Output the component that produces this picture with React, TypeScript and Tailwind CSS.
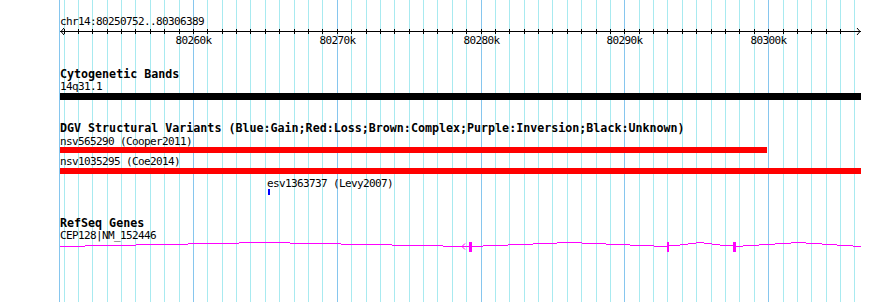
const START = 80250752;
const SCALE = 800 / 55637;
const px = (pos: number) => 60 + (pos - START) * SCALE;

// kb grid, every 1k; the 10k ones are darker
const grid = Array.from({ length: 56 }, (_, i) => {
  const pos = 80250000 + (i + 1) * 1000;
  return { x: Math.round(px(pos)), major: (i + 1) % 10 === 0 };
});

const labels = [80260, 80270, 80280, 80290, 80300];

// intron hats, stepped like the original render: [x1, x2, y]
const introns: [number, number, number][] = [
  [60, 85, 246], [85, 136, 245], [136, 188, 244], [188, 239, 243], [239, 290, 242],
  [290, 341, 243], [341, 392, 244], [392, 443, 245], [443, 469, 246],
  [472, 483, 246], [483, 508, 245], [508, 533, 244], [533, 557, 243], [557, 582, 242],
  [582, 606, 243], [606, 630, 244], [630, 654, 245], [654, 667, 246],
  [669, 680, 245], [680, 688, 244], [688, 696, 243], [696, 704, 242], [704, 712, 243],
  [712, 720, 244], [720, 733, 245],
  [736, 743, 246], [743, 759, 245], [759, 775, 244], [775, 791, 243], [791, 806, 242],
  [806, 822, 243], [822, 837, 244], [837, 853, 245], [853, 861, 246],
];
const exons: [number, number][] = [[469, 3], [667, 2], [733, 3]];

const small = "font-['DejaVu_Sans_Mono',monospace] text-[11px] leading-[12px] tracking-[-0.62px] text-black whitespace-pre";
const title = "font-['DejaVu_Sans_Mono',monospace] font-bold text-[11.67px] leading-[13px] tracking-[0px] text-black whitespace-pre";

function Grid() {
  return (
    <svg className="absolute inset-0" width={890} height={302}>
      <rect x={59} y={0} width={1} height={302} fill="#86c6ee" />
      {grid.map((g) => (
        <rect key={g.x} x={g.x} y={0} width={1} height={302} fill={g.major ? "#86c6ee" : "#a8eaf0"} />
      ))}
    </svg>
  );
}

function Ruler() {
  // top of this svg sits at y=28
  return (
    <svg width={890} height={20} className="block">
      <rect x={60} y={3} width={801} height={1} fill="#000" />
      <polyline points="64,0 61,3.5 64,7" fill="none" stroke="#000" strokeWidth={1} />
      <polyline points="857,0 860,3.5 857,7" fill="none" stroke="#000" strokeWidth={1} />
      {grid.slice(0, 55).map((g) => (
        <rect key={g.x} x={g.x} y={1} width={1} height={5} fill="#000" />
      ))}
      {labels.map((k) => (
        <text
          key={k}
          x={Math.round(px(k * 1000)) + 0.5}
          y={16}
          textAnchor="middle"
          fontFamily="DejaVu Sans Mono, monospace"
          fontSize={11}
          letterSpacing={-0.62}
          fill="#000"
        >
          {k}k
        </text>
      ))}
    </svg>
  );
}

function GeneModel() {
  // top of this svg sits at y=241
  const top = 241;
  return (
    <svg width={890} height={13} className="block">
      {introns.map(([a, b, y]) => (
        <rect key={a} x={a} y={y - top} width={b - a} height={1} fill="#ff00ff" />
      ))}
      {exons.map(([x, w]) => (
        <rect key={x} x={x} y={1} width={w} height={10} fill="#ff00ff" />
      ))}
      <polyline points="465,2.5 462,5.5 465,8.5" fill="none" stroke="#ff00ff" strokeWidth={1} />
    </svg>
  );
}

export default function App() {
  return (
    <div className="relative w-[890px] h-[302px] bg-white overflow-hidden">
      <Grid />
      <div className="relative flex flex-col pt-[16px]">
        <div className={`${small} pl-[60px]`}>chr14:80250752..80306389</div>
        <Ruler />

        <div className={`${title} pl-[60px] mt-[20px]`}>Cytogenetic Bands</div>
        <div className={`${small} pl-[60px]`}>14q31.1</div>
        <div className="ml-[60px] w-[801px] h-[7px] bg-black" />

        <div className={`${title} pl-[60px] mt-[22px]`}>
          DGV Structural Variants (Blue:Gain;Red:Loss;Brown:Complex;Purple:Inversion;Black:Unknown)
        </div>
        <div className={`${small} pl-[60px] mt-[1px]`}>nsv565290 (Cooper2011)</div>
        <div className="ml-[60px] mt-[-1px] w-[707px] h-[6px] bg-[#ff0000]" />
        <div className={`${small} pl-[60px] mt-[3px]`}>nsv1035295 (Coe2014)</div>
        <div className="ml-[60px] w-[801px] h-[6px] bg-[#ff0000]" />
        <div className={`${small} pl-[267px] mt-[4px]`}>esv1363737 (Levy2007)</div>
        <div className="ml-[268px] mt-[-1px] w-[2px] h-[6px] bg-[#0000ff]" />

        <div className={`${title} pl-[60px] mt-[22px]`}>RefSeq Genes</div>
        <div className={`${small} pl-[60px]`}>CEP128|NM_152446</div>
        <div className="mt-[-1px]">
          <GeneModel />
        </div>
      </div>
    </div>
  );
}
